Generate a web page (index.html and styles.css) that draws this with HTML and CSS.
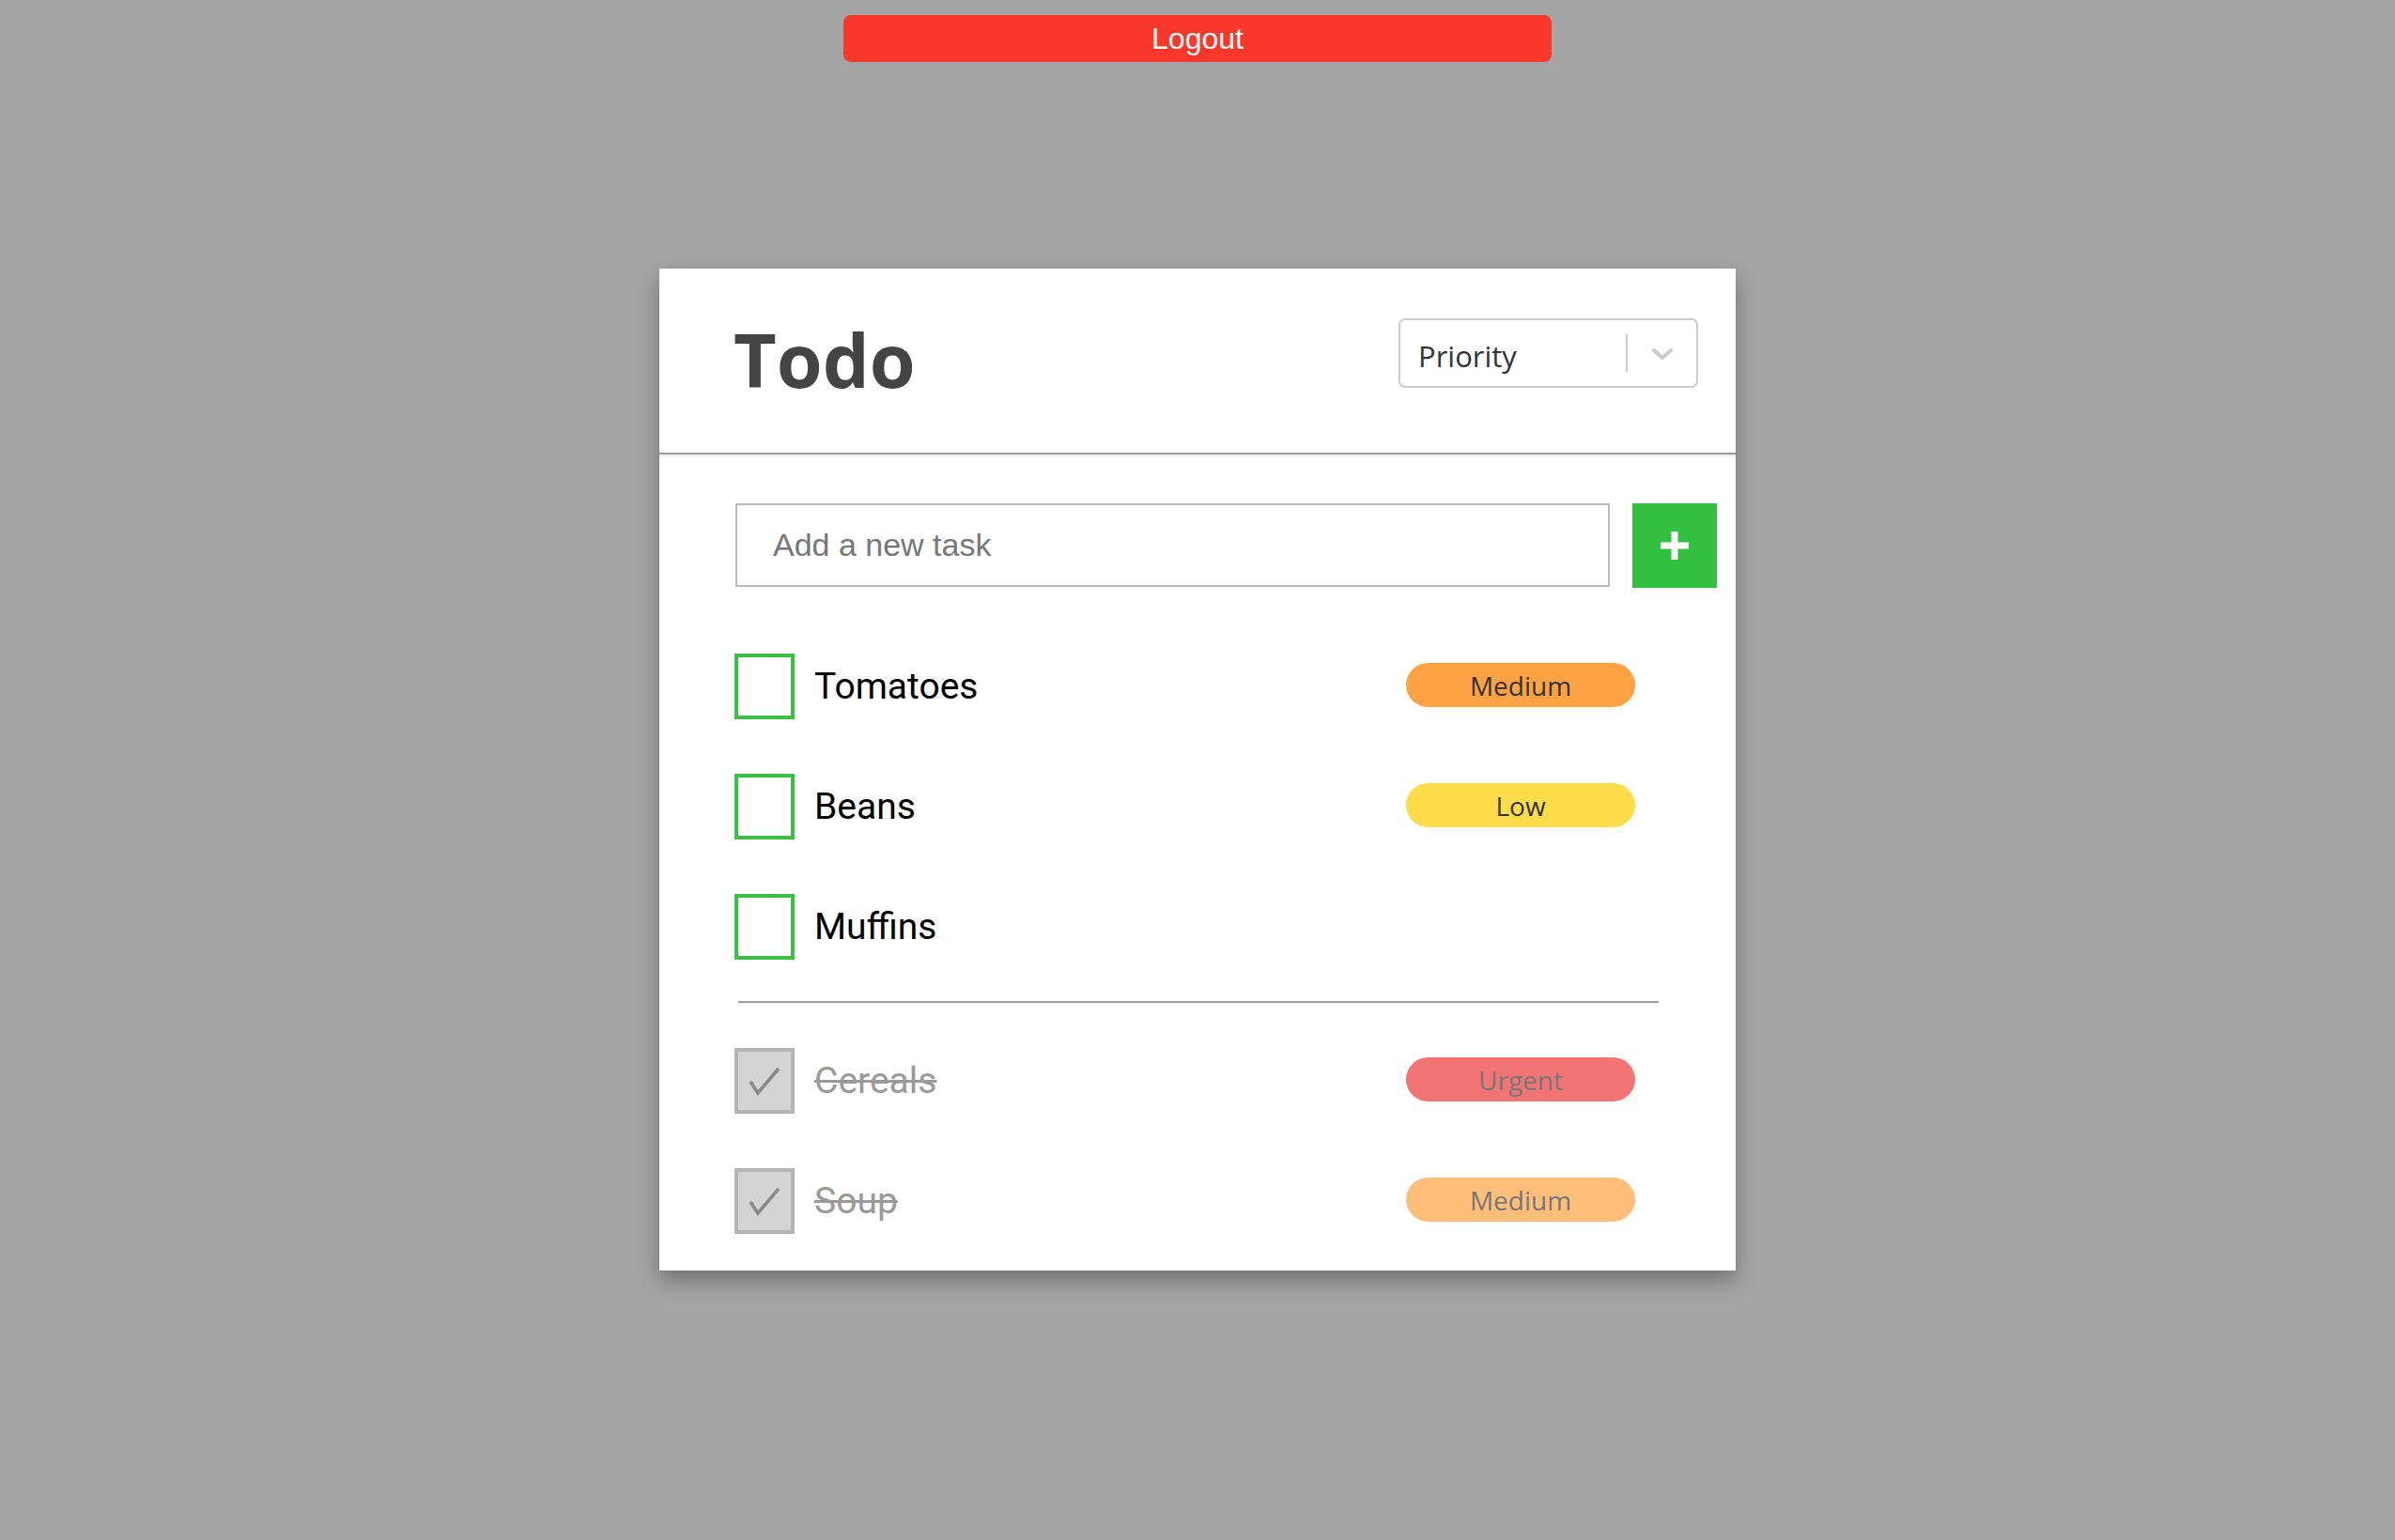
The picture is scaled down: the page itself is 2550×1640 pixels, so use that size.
FILE: index.html
```html
<!DOCTYPE html>
<html lang="en">
<head>
<meta charset="utf-8">
<title>Todo</title>
<link rel="stylesheet" href="styles.css">
</head>
<body>
<button class="logout" type="button">Logout</button>
<main class="card">
  <header class="card-header">
    <h1 class="title">Todo</h1>
    <div class="select">
      <span class="select-value">Priority</span>
      <span class="select-sep"></span>
      <span class="select-arrow">
        <svg width="24" height="14" viewBox="0 0 24 14"><polyline points="3,3 12,11 21,3" fill="none" stroke="#cccccc" stroke-width="4" stroke-linecap="round" stroke-linejoin="round"/></svg>
      </span>
    </div>
  </header>
  <section class="card-body">
    <form class="add-row">
      <input class="add-input" type="text" placeholder="Add a new task">
      <button class="add-btn" type="button" aria-label="Add">
        <svg width="30" height="30" viewBox="0 0 30 30"><rect x="11.5" y="0" width="7" height="30" fill="#fff"/><rect x="0" y="11.5" width="30" height="7" fill="#fff"/></svg>
      </button>
    </form>
    <ul class="tasks">
      <li class="task"><span class="box"></span><span class="task-name">Tomatoes</span><span class="badge badge-medium">Medium</span></li>
      <li class="task"><span class="box"></span><span class="task-name">Beans</span><span class="badge badge-low">Low</span></li>
      <li class="task"><span class="box"></span><span class="task-name">Muffins</span></li>
    </ul>
    <div class="divider"></div>
    <ul class="tasks">
      <li class="task done"><span class="box"><svg width="36" height="32" viewBox="0 0 36 32"><polyline points="3,17 11,29 33,3" fill="none" stroke="#8a8a8a" stroke-width="3.6"/></svg></span><span class="task-name">Cereals</span><span class="badge badge-urgent">Urgent</span></li>
      <li class="task done"><span class="box"><svg width="36" height="32" viewBox="0 0 36 32"><polyline points="3,17 11,29 33,3" fill="none" stroke="#8a8a8a" stroke-width="3.6"/></svg></span><span class="task-name">Soup</span><span class="badge badge-medium">Medium</span></li>
    </ul>
  </section>
</main>
</body>
</html>
```
FILE: styles.css
```css
* { box-sizing: border-box; }
html, body { margin: 0; padding: 0; }
body {
  background: #a5a5a5;
  display: flex;
  flex-direction: column;
  align-items: center;
  min-height: 1640px;
  font-family: "Liberation Sans", Arial, sans-serif;
}
.logout {
  margin-top: 16px;
  width: 754px;
  height: 50px;
  border: none;
  border-radius: 8px;
  background: #f9372a;
  color: #fff;
  font-family: "Liberation Sans", Arial, sans-serif;
  font-size: 32px;
  padding: 0;
  line-height: 50px;
}
.card {
  margin-top: 220px;
  width: 1146px;
  background: #fff;
  box-shadow: 0 10px 22px rgba(0,0,0,0.32);
}
.card-header {
  height: 198px;
  display: flex;
  justify-content: space-between;
  align-items: flex-start;
  padding: 0 40px 0 79px;
  border-bottom: 2px solid #9a9a9a;
  box-shadow: 0 2px 0 #ececec;
}
.title {
  margin: 0;
  margin-top: 42px;
  font-family: "Open Sans", sans-serif;
  font-weight: 700;
  font-size: 79px;
  line-height: 109px;
  color: #444;
}
.select {
  margin-top: 53px;
  width: 319px;
  height: 74px;
  border: 2px solid #cccccc;
  border-radius: 7px;
  display: flex;
  align-items: center;
}
.select-value {
  flex: 1;
  padding-left: 19px;
  padding-top: 6px;
  font-family: "Open Sans", sans-serif;
  font-size: 31px;
  color: #333;
}
.select-sep {
  width: 2px;
  height: 40px;
  background: #cccccc;
}
.select-arrow {
  width: 73px;
  display: flex;
  justify-content: center;
  align-items: center;
  padding-top: 2px;
}
.card-body {
  padding: 52px 20px 39px 81px;
}
.add-row {
  display: flex;
  gap: 24px;
  margin: 0;
}
.add-input {
  width: 931px;
  height: 89px;
  border: 2px solid #bbbbbb;
  padding: 0 0 0 38px;
  font-family: "Liberation Sans", Arial, sans-serif;
  font-size: 34px;
  color: #333;
  outline: none;
}
.add-input::placeholder { color: #777; }
.add-btn {
  width: 90px;
  height: 90px;
  border: none;
  padding: 0;
  background: #33bf40;
  display: flex;
  align-items: center;
  justify-content: center;
}
.tasks {
  list-style: none;
  margin: 0;
  padding: 0;
  display: flex;
  flex-direction: column;
  gap: 58px;
}
.add-row + .tasks { margin-top: 70px; }
.task {
  display: flex;
  align-items: center;
  height: 70px;
  margin-left: -1px;
}
.box {
  width: 64px;
  height: 70px;
  border: 4px solid #3bbf45;
  flex: none;
  display: flex;
  align-items: center;
  justify-content: center;
}
.task-name {
  flex: 1;
  margin-left: 21px;
  font-family: Roboto, sans-serif;
  font-size: 39px;
  color: #000;
}
.badge {
  width: 244px;
  height: 47px;
  border-radius: 24px;
  margin-right: 87px;
  margin-top: -3px;
  display: flex;
  align-items: center;
  justify-content: center;
  font-family: "Open Sans", sans-serif;
  font-size: 28px;
  color: #333;
}
.badge-medium { background: #ffa243; }
.badge-low { background: #ffdc4a; }
.badge-urgent { background: #ee4444; }
.divider {
  margin: 44px 62px 47px 3px;
  height: 3px;
  border-top: 2px solid #9f9f9f;
  border-bottom: 1px solid #ececec;
}
.done .box {
  background: #d4d4d4;
  border-color: #b5b5b5;
}
.done .task-name {
  color: #9a9a9a;
  text-decoration: line-through;
}
.done .badge { color: #777; }
.done .badge-urgent { background: #f37474; }
.done .badge-medium { background: #ffbe79; }
```
